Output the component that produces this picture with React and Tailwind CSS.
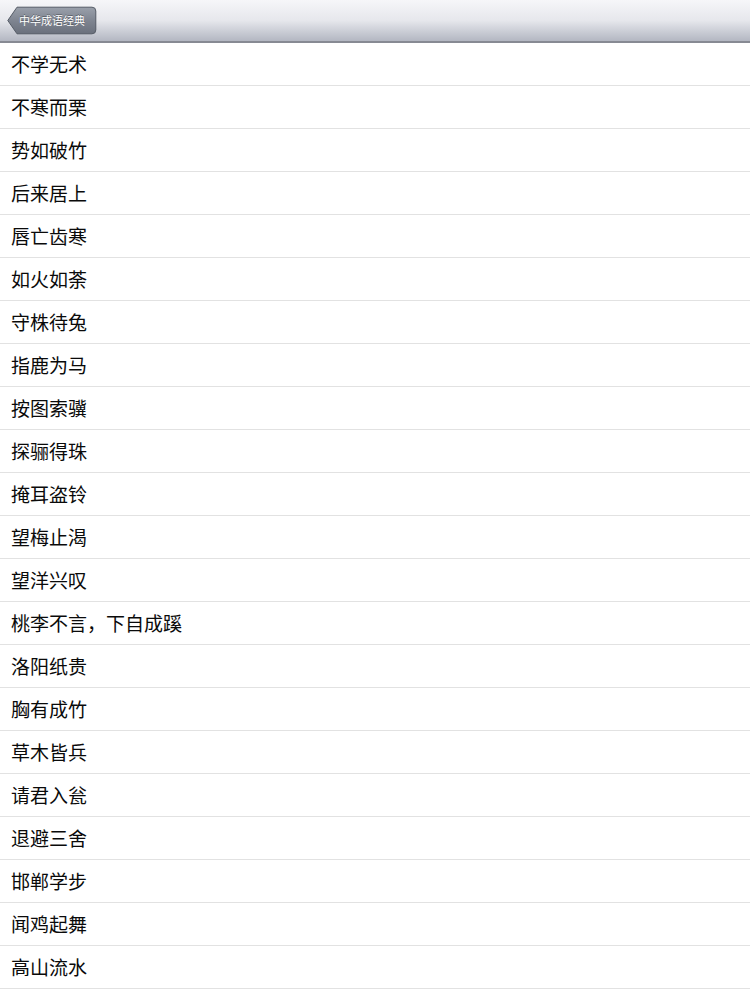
import React from 'react';

const idioms = [
  '不学无术',
  '不寒而栗',
  '势如破竹',
  '后来居上',
  '唇亡齿寒',
  '如火如荼',
  '守株待兔',
  '指鹿为马',
  '按图索骥',
  '探骊得珠',
  '掩耳盗铃',
  '望梅止渴',
  '望洋兴叹',
  '桃李不言，下自成蹊',
  '洛阳纸贵',
  '胸有成竹',
  '草木皆兵',
  '请君入瓮',
  '退避三舍',
  '邯郸学步',
  '闻鸡起舞',
  '高山流水',
];

function BackButton({ label }) {
  return (
    <div className="relative w-[90px] h-[29px]">
      <svg className="absolute inset-0" width="90" height="29" viewBox="0 0 90 29">
        <defs>
          <linearGradient id="backGrad" x1="0" y1="0" x2="0" y2="1">
            <stop offset="0" stopColor="#9aa0ab" />
            <stop offset="0.5" stopColor="#7f8591" />
            <stop offset="1" stopColor="#6a707c" />
          </linearGradient>
        </defs>
        <path
          d="M0.8 14.5 L10 1.2 L85 1.2 Q88.8 1.2 88.8 5 L88.8 24 Q88.8 27.8 85 27.8 L10 27.8 Z"
          fill="url(#backGrad)"
          stroke="#555b66"
          strokeWidth="1"
        />
      </svg>
      <span className="relative flex h-full items-center pl-[12px] text-[11px] text-white font-['Noto_Sans_CJK_SC',sans-serif] [text-shadow:0_-1px_0_rgba(0,0,0,0.35)]">
        {label}
      </span>
    </div>
  );
}

export default function App() {
  return (
    <div className="w-[750px] min-h-[1000px] bg-white font-['Noto_Sans_CJK_SC',sans-serif]">
      <div className="h-[43px] flex items-center pl-[7px] bg-gradient-to-b from-[#f6f6f9] via-[#e6e7ec] to-[#b3b7c2] border-b-2 border-[#878a93]">
        <BackButton label="中华成语经典" />
      </div>
      <ul>
        {idioms.map((name) => (
          <li
            key={name}
            className="h-[43px] flex items-center pl-[11px] border-b border-[#e2e2e2] text-[19px] text-[#0a0a0a]"
          >
            {name}
          </li>
        ))}
      </ul>
    </div>
  );
}
